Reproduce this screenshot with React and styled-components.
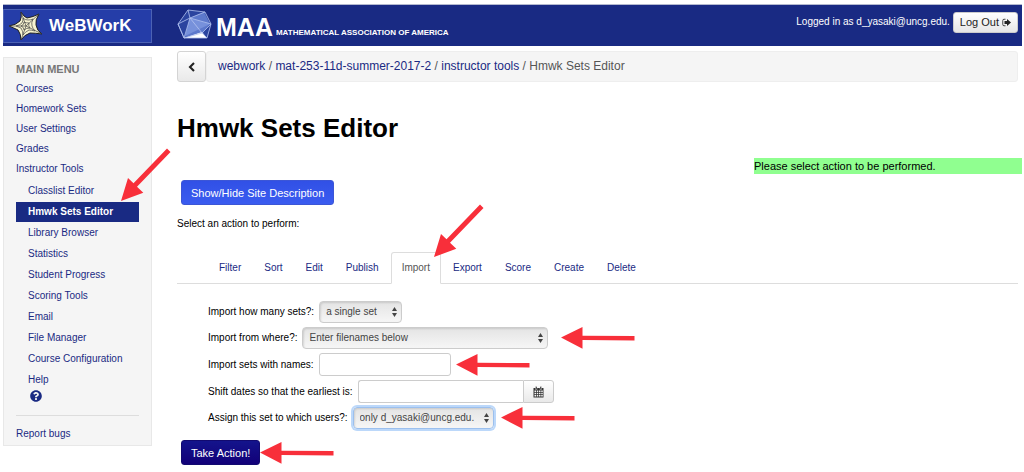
import { useState } from "react";
import styled, { createGlobalStyle, css } from "styled-components";
import { FaQuestionCircle } from "react-icons/fa";

const GlobalStyle = createGlobalStyle`
  * {
    box-sizing: border-box;
  }

  body {
    margin: 0;
    padding: 4px 2px 8px 3px;
    background: #fff;
    color: #000;
    font-family: "Liberation Sans", Arial, sans-serif;
    font-size: 10px;
    line-height: 16px;
  }

  button, input, select {
    font: inherit;
  }

  a {
    color: #1a2a83;
    text-decoration: none;
  }
`;

const Masthead = styled.header`
  display: flex;
  height: 42px;
  background: #192a83;
  border-top: 1px solid #b4b9cf;
  color: #fff;
`;

const BrandLink = styled.a`
  display: flex;
  align-items: center;
  gap: 6px;
  width: 149px;
  height: 34px;
  margin-top: 4px;
  padding-left: 5px;
  background: #253da8;
  border: 1px solid #4c62b4;
  color: #fff;
  font-size: 17px;
  font-weight: bold;
`;

const MaaLink = styled.a`
  display: flex;
  align-items: flex-end;
  gap: 3px;
  margin-left: 25px;
  padding-bottom: 6px;
  color: #fff;
  font-weight: bold;
`;

const MaaInitials = styled.span`
  font-size: 25px;
  line-height: 26px;
`;

const MaaName = styled.span`
  font-size: 8px;
  line-height: 14px;
`;

const LoginStatus = styled.div`
  display: flex;
  align-items: center;
  gap: 3px;
  height: 22px;
  margin: 6px 4px 0 auto;
`;

const buttonBase = css`
  border: 1px solid;
  border-radius: 3px;
  cursor: pointer;
`;

const LogOutButton = styled.button`
  ${buttonBase}
  display: flex;
  align-items: center;
  gap: 3px;
  height: 21px;
  padding: 0 6px;
  background: linear-gradient(#fff, #e6e6e6);
  border-color: #ccc;
  color: #222;
  font-size: 11px;
`;

const Columns = styled.div`
  display: flex;
  align-items: flex-start;
  gap: 25px;
`;

const Sidebar = styled.nav`
  flex: none;
  width: 149px;
  margin-top: 11px;
  padding: 1px 12px;
  background: #f5f5f5;
  border: 1px solid #e8e8e8;
  line-height: 20px;
`;

const SidebarTitle = styled.h2`
  margin: 0;
  color: #777;
  font-size: 11px;
  line-height: 20px;
`;

const MenuList = styled.ul`
  margin: 0;
  padding: 0;
  list-style: none;
`;

const SubMenuList = styled(MenuList)`
  display: grid;
  gap: 1px;
  margin-top: 2px;
`;

const SubMenuItem = styled.li`
  position: relative;
`;

const SubMenuLink = styled.a`
  display: block;
  padding-left: 12px;
  ${({ $active }) =>
    $active &&
    css`
      background: #192a83;
      color: #fff;
      font-weight: bold;
    `}
`;

const HelpLink = styled.a`
  display: flex;
  padding: 0 14px;
  font-size: 12px;
`;

const Divider = styled.hr`
  margin: 13px 0 8px;
  border: 0;
  border-top: 1px solid #ddd;
`;

const Main = styled.main`
  flex: 1;
  min-width: 0;
  margin-top: 5px;
`;

const BreadcrumbBar = styled.div`
  display: flex;
  height: 31px;
  margin-right: 4px;
`;

const BackButton = styled.button`
  ${buttonBase}
  display: grid;
  place-items: center;
  width: 29px;
  padding: 0;
  background: linear-gradient(#fff, #e9e9e9);
  border-color: #d4d4d4;
`;

const Breadcrumb = styled.nav`
  flex: 1;
  padding: 0 11px;
  background: #f5f5f5;
  border: 1px solid #eee;
  border-radius: 3px;
  color: #555;
  font-size: 12px;
  line-height: 29px;
`;

const PageTitle = styled.h1`
  margin: 30px 0 14px;
  font-size: 26px;
  line-height: 32px;
`;

const Message = styled.div`
  width: 268px;
  margin-left: auto;
  background: #90ff90;
  font-size: 11px;
`;

const PrimaryButton = styled.button`
  ${buttonBase}
  display: block;
  height: 25px;
  padding: 0 9px;
  color: #fff;
  font-size: 11px;
  background: ${({ $dark }) =>
    $dark ? "linear-gradient(#14148c, #120078)" : "linear-gradient(#3150e6, #3a5cf0)"};
  border-color: ${({ $dark }) => ($dark ? "#120a70" : "#3c56d6")};
`;

const Actions = styled.div`
  padding: 6px 0 0 4px;
`;

const Prompt = styled.p`
  margin: 11px 0 20px;
`;

const TabBar = styled.div`
  display: flex;
  gap: 1px;
  height: 32px;
  margin-right: 4px;
  padding-left: 31px;
  border-bottom: 1px solid #ddd;
`;

const TabButton = styled.button`
  position: relative;
  height: 32px;
  padding: 0 10px;
  background: none;
  border: 1px solid transparent;
  border-radius: 3px 3px 0 0;
  color: #1a2a83;
  cursor: pointer;
  ${({ $active }) =>
    $active &&
    css`
      background: #fff;
      border-color: #ddd #ddd #fff;
      color: #555;
    `}
`;

const ImportForm = styled.form`
  margin: 0;
`;

const Fields = styled.div`
  display: grid;
  gap: 4px;
  padding: 17px 0 11px 31px;
`;

const Field = styled.div`
  display: flex;
  align-items: center;
  gap: 5px;
`;

const SelectWrap = styled.span`
  position: relative;
  width: ${({ $width }) => $width}px;
`;

const Select = styled.select`
  display: block;
  width: 100%;
  height: 22px;
  padding: 0 14px 0 6px;
  appearance: none;
  background: linear-gradient(#e4e4e4, #f6f6f6);
  border: 1px solid #ccc;
  border-radius: 4px;
  box-shadow: inset 1px 1px 2px rgba(0, 0, 0, 0.12);
  color: #444;
  outline: none;
  ${({ $focused }) =>
    $focused &&
    css`
      border-color: #9cc0ee;
      box-shadow: 0 0 0 2px #bcd8fa, inset 1px 1px 2px rgba(0, 0, 0, 0.12);
    `}
`;

const SelectArrows = styled.svg`
  position: absolute;
  top: 6px;
  right: 5px;
  pointer-events: none;
`;

const TextInput = styled.input`
  width: ${({ $width }) => $width}px;
  height: 23px;
  padding: 0 6px;
  border: 1px solid #ccc;
  border-radius: 3px;
  color: #555;
`;

const DateGroup = styled.span`
  display: flex;

  ${TextInput} {
    border-right: 0;
    border-radius: 3px 0 0 3px;
  }
`;

const CalendarButton = styled.button`
  ${buttonBase}
  display: grid;
  place-items: center;
  width: 31px;
  height: 23px;
  padding: 0;
  background: linear-gradient(#fff, #e9e9e9);
  border-color: #ccc;
  border-radius: 0 3px 3px 0;
`;

const SubmitRow = styled.div`
  display: flex;
  align-items: center;
  padding-left: 4px;
`;

const RowArrow = styled.svg`
  flex: none;
  margin-left: ${({ $gap = 0 }) => $gap}px;
`;

const CornerArrow = styled.svg`
  position: absolute;
  left: ${({ $left }) => $left};
  bottom: ${({ $bottom }) => $bottom};
  z-index: 1;
  pointer-events: none;
`;

const PointerLeft = ({ gap }) => (
  <RowArrow $gap={gap} width="74" height="22" viewBox="0 0 74 22" aria-hidden="true">
    <path d="M0 10.5 21.5 0v8.7L73.5 9v4.4l-52-.3v8.7z" fill="#f82f3a" />
  </RowArrow>
);

const PointerDown = ({ left, bottom }) => (
  <CornerArrow
    $left={left}
    $bottom={bottom}
    width="50"
    height="54"
    viewBox="0 0 50 54"
    aria-hidden="true"
  >
    <path d="M0 53 7 30l5.5 5.2L46 .5l3.5 3.4L16 38.8l6.3 6z" fill="#f82f3a" />
  </CornerArrow>
);

const WebLogo = () => (
  <svg width="34" height="30" viewBox="0 0 34 30" aria-hidden="true">
    <path
      d="M12 1Q15 6 18 7Q24 6 30 3Q26 9 27 14Q28 20 33 23Q26 22 21 22Q15 24 12 29Q12 23 9 19Q5 17 0 15Q7 14 11 10Q13 6 12 1z"
      fill="#f6f3d0"
      stroke="#222"
      strokeWidth="1"
    />
    <path
      d="M12 1 17 15 12 29M30 3 17 15 33 23M0 15H17M14 7Q16 9 19 9Q22 9 24 8Q22 12 23 15Q24 18 26 20Q22 19 20 19Q16 21 14 24Q14 20 12 17L7 15Q11 14 13 12Q14 10 14 7zM15 11Q17 12 20 12Q19 15 21 17Q17 17 15 19Q15 16 12 15Q15 14 15 11z"
      fill="none"
      stroke="#444"
      strokeWidth=".7"
    />
  </svg>
);

const MaaLogo = () => (
  <svg width="36" height="31" viewBox="0 0 36 31" aria-hidden="true">
    <path d="M11 1 28 3l6 12-4 14H7L1 15z" fill="#2b449f" />
    <path d="M13 9 27 3l6 12-8 10-17 3z" fill="#5d79cc" />
    <path d="M13 9 33 15 8 27z" fill="#7791db" />
    <path d="M7 29 25 23l5 6z" fill="#fff" />
    <path
      d="M11 1 28 3l6 12-4 14H7L1 15zM11 1l2 8L28 3M1 15 13 9l21 6-9 9L7 29 13 9M1 15l6 14M25 24l5 5M13 9l12 15"
      fill="none"
      stroke="#b3c3f0"
      strokeWidth=".8"
    />
  </svg>
);

const ChevronLeftIcon = () => (
  <svg width="8" height="10" viewBox="0 0 8 10" aria-hidden="true">
    <path d="M6 1 2 5l4 4" fill="none" stroke="#222" strokeWidth="2.1" />
  </svg>
);

const SignOutIcon = () => (
  <svg width="9" height="9" viewBox="0 0 18 18" aria-hidden="true">
    <path d="M7 2.5H4Q1.5 2.5 1.5 5v8Q1.5 15.5 4 15.5h3" fill="none" stroke="#333" strokeWidth="1.8" />
    <path d="M10 2 18 9l-8 7v-4H5V6h5z" fill="#222" />
  </svg>
);

const CalendarIcon = () => (
  <svg width="11" height="12" viewBox="0 0 22 24" aria-hidden="true">
    <path d="M1 4h20v19H1z" fill="#333" />
    <path d="M5 1h3v6H5zM14 1h3v6h-3z" fill="#333" stroke="#f4f4f4" strokeWidth=".8" />
    <path
      d="M3 9h3v3H3zM7.5 9h3v3h-3zM12 9h3v3h-3zM16.5 9h3v3h-3zM3 13.5h3v3H3zM7.5 13.5h3v3h-3zM12 13.5h3v3h-3zM16.5 13.5h3v3h-3zM3 18h3v3H3zM7.5 18h3v3h-3zM12 18h3v3h-3zM16.5 18h3v3h-3z"
      fill="#f4f4f4"
    />
  </svg>
);

const SelectField = ({ id, label, width, options, focused, children }) => (
  <Field>
    <label htmlFor={id}>{label}</label>
    <SelectWrap $width={width}>
      <Select id={id} $focused={focused}>
        {options.map((option) => (
          <option key={option}>{option}</option>
        ))}
      </Select>
      <SelectArrows width="5" height="10" viewBox="0 0 5 10" aria-hidden="true">
        <path d="M0 4 2.5 0 5 4zM0 6h5L2.5 10z" fill="#444" />
      </SelectArrows>
    </SelectWrap>
    {children}
  </Field>
);

const mainLinks = ["Courses", "Homework Sets", "User Settings", "Grades", "Instructor Tools"];
const toolLinks = [
  "Classlist Editor",
  "Hmwk Sets Editor",
  "Library Browser",
  "Statistics",
  "Student Progress",
  "Scoring Tools",
  "Email",
  "File Manager",
  "Course Configuration",
  "Help",
];
const tabs = ["Filter", "Sort", "Edit", "Publish", "Import", "Export", "Score", "Create", "Delete"];

const App = () => {
  const [activeTab, setActiveTab] = useState("Import");

  const handleSubmit = (event) => {
    event.preventDefault();
  };

  return (
    <>
      <GlobalStyle />
      <Masthead>
        <BrandLink href="#">
          <WebLogo />
          WeBWorK
        </BrandLink>
        <MaaLink href="#">
          <MaaLogo />
          <MaaInitials>MAA</MaaInitials>
          <MaaName>MATHEMATICAL ASSOCIATION OF AMERICA</MaaName>
        </MaaLink>
        <LoginStatus>
          Logged in as d_yasaki@uncg.edu.
          <LogOutButton type="button">
            Log Out <SignOutIcon />
          </LogOutButton>
        </LoginStatus>
      </Masthead>

      <Columns>
        <Sidebar>
          <SidebarTitle>MAIN MENU</SidebarTitle>
          <MenuList>
            {mainLinks.map((name) => (
              <li key={name}>
                <a href="#">{name}</a>
              </li>
            ))}
          </MenuList>
          <SubMenuList>
            {toolLinks.map((name) => (
              <SubMenuItem key={name}>
                <SubMenuLink href="#" $active={name === "Hmwk Sets Editor"}>
                  {name}
                </SubMenuLink>
                {name === "Hmwk Sets Editor" && <PointerDown left="105px" bottom="20px" />}
              </SubMenuItem>
            ))}
          </SubMenuList>
          <HelpLink href="#" aria-label="Help">
            <FaQuestionCircle />
          </HelpLink>
          <Divider />
          <a href="#">Report bugs</a>
        </Sidebar>

        <Main>
          <BreadcrumbBar>
            <BackButton type="button" aria-label="Back">
              <ChevronLeftIcon />
            </BackButton>
            <Breadcrumb>
              <a href="#">webwork</a> / <a href="#">mat-253-11d-summer-2017-2</a> /{" "}
              <a href="#">instructor tools</a> / Hmwk Sets Editor
            </Breadcrumb>
          </BreadcrumbBar>

          <PageTitle>Hmwk Sets Editor</PageTitle>
          <Message>Please select action to be performed.</Message>

          <Actions>
            <PrimaryButton type="button">Show/Hide Site Description</PrimaryButton>
          </Actions>
          <Prompt>Select an action to perform:</Prompt>

          <TabBar role="tablist">
            {tabs.map((tab) => (
              <TabButton
                key={tab}
                type="button"
                role="tab"
                aria-selected={tab === activeTab}
                $active={tab === activeTab}
                onClick={() => setActiveTab(tab)}
              >
                {tab}
                {tab === "Import" && <PointerDown left="42px" bottom="25px" />}
              </TabButton>
            ))}
          </TabBar>

          <ImportForm onSubmit={handleSubmit}>
            <Fields>
              <SelectField
                id="number"
                label="Import how many sets?:"
                width={83}
                options={["a single set", "multiple sets"]}
              />
              <SelectField
                id="source"
                label="Import from where?:"
                width={246}
                options={["Enter filenames below"]}
              >
                <PointerLeft gap={8} />
              </SelectField>
              <Field>
                <label htmlFor="names">Import sets with names:</label>
                <TextInput id="names" type="text" $width={132} />
                <PointerLeft />
              </Field>
              <Field>
                <label htmlFor="start">Shift dates so that the earliest is:</label>
                <DateGroup>
                  <TextInput id="start" type="text" $width={165} />
                  <CalendarButton type="button" aria-label="Pick a date">
                    <CalendarIcon />
                  </CalendarButton>
                </DateGroup>
              </Field>
              <SelectField
                id="assign"
                label="Assign this set to which users?:"
                width={141}
                options={["only d_yasaki@uncg.edu.", "all current users"]}
                focused
              >
                <PointerLeft gap={2} />
              </SelectField>
            </Fields>
            <SubmitRow>
              <PrimaryButton type="submit" $dark>
                Take Action!
              </PrimaryButton>
              <PointerLeft />
            </SubmitRow>
          </ImportForm>
        </Main>
      </Columns>
    </>
  );
};

export default App;
